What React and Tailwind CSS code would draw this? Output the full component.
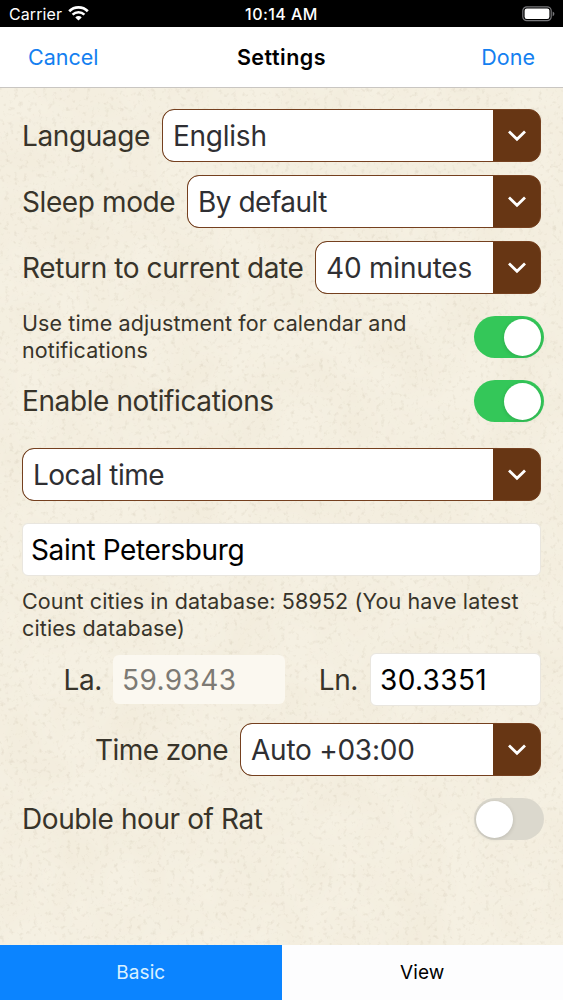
import clsx from "clsx";

function StatusBar() {
  return (
    <div className="grid h-[27px] shrink-0 grid-cols-3 items-center bg-black pt-0.5 text-white">
      <div className="flex items-center gap-[6px] pl-[9px]">
        <span className="-mt-px text-[16px] leading-5 tracking-[0.1px]">Carrier</span>
        <svg width="21" height="15" viewBox="0 0 21 15" fill="none" stroke="currentColor" className="-mt-0.5">
          <path d="M1.2 5.3 A13.2 13.2 0 0 1 19.8 5.3" strokeWidth="2.7" />
          <path d="M4.6 8.7 A8.4 8.4 0 0 1 16.4 8.7" strokeWidth="2.5" />
          <path d="M10.5 14.6 L7.3 11.4 A4.6 4.6 0 0 1 13.7 11.4 Z" fill="currentColor" stroke="none" />
        </svg>
      </div>
      <span className="-mt-px text-center text-[16px] leading-5 font-medium tracking-[0.45px]">10:14 AM</span>
      <div className="-mt-0.5 flex justify-end pr-[8px]">
        <svg width="33" height="16" viewBox="0 0 33 16">
          <rect x="0.8" y="0.8" width="28.4" height="13.9" rx="4" fill="none" stroke="#77777a" strokeWidth="1.2" />
          <rect x="2.6" y="2.5" width="24.8" height="10.5" rx="2.2" fill="#fff" />
          <path d="M30.7 5.4 Q32.4 6.2 32.4 7.8 T30.7 10.2 Z" fill="#77777a" />
        </svg>
      </div>
    </div>
  );
}

function NavBar() {
  return (
    <header className="grid h-[61px] shrink-0 grid-cols-3 items-center border-b border-[#c9c6c2] bg-white px-7 text-[21.5px]">
      <button className="text-left text-[#147ff0]">Cancel</button>
      <h1 className="text-center font-semibold tracking-[0.5px] text-black">Settings</h1>
      <button className="text-right text-[#147ff0]">Done</button>
    </header>
  );
}

// faint grain of the paper behind the form
function PaperTexture() {
  return (
    <svg className="absolute inset-0 -z-10 h-full w-full">
      <filter id="grain" x="0" y="0" width="100%" height="100%" colorInterpolationFilters="sRGB">
        <feTurbulence type="fractalNoise" baseFrequency="0.21" numOctaves="4" seed="4" />
        <feColorMatrix values="0 0 0 0 0.66  0 0 0 0 0.6  0 0 0 0 0.5  0.5 0 0 0 -0.28" />
      </filter>
      <filter id="blotches" x="0" y="0" width="100%" height="100%" colorInterpolationFilters="sRGB">
        <feTurbulence type="fractalNoise" baseFrequency="0.018" numOctaves="3" seed="9" />
        <feColorMatrix values="0 0 0 0 0.94  0 0 0 0 0.91  0 0 0 0 0.84  0.9 0 0 0 -0.28" />
      </filter>
      <rect width="100%" height="100%" filter="url(#blotches)" />
      <rect width="100%" height="100%" filter="url(#grain)" />
    </svg>
  );
}

function Select({ value, className }) {
  return (
    <button
      className={clsx(
        "flex h-[53px] min-w-0 overflow-hidden rounded-xl border-[1.5px] border-[#75401f] bg-[#673614] text-left text-[#2f2f33]",
        className
      )}
    >
      <span className="flex h-full flex-1 items-center rounded-l-[11px] bg-white pl-[10px] whitespace-nowrap">
        {value}
      </span>
      <span className="flex h-full w-[47px] shrink-0 items-center justify-center">
        <svg width="20" height="14" viewBox="0 0 20 14" fill="none" stroke="#fff" strokeWidth="2.8">
          <path d="M2 2.4 L10 10.2 L18 2.4" />
        </svg>
      </span>
    </button>
  );
}

function Toggle({ on }) {
  return (
    <span
      className={clsx(
        "-mr-[3px] flex h-[42px] w-[70px] shrink-0 items-center rounded-full",
        on ? "justify-end bg-[#34c759] pr-[3px]" : "justify-start bg-[#dbd8cd] pl-[2px]"
      )}
    >
      <span className="h-[37px] w-[37px] rounded-full bg-white shadow-[0_1px_4px_rgba(0,0,0,0.15)]" />
    </span>
  );
}

export default function App() {
  return (
    <div className="flex h-[1000px] w-[563px] flex-col overflow-hidden font-['Inter',sans-serif]">
      <StatusBar />
      <NavBar />

      <main className="relative isolate flex flex-1 flex-col bg-[#f5f0e2] px-[22px] pt-[21px] text-[28px] leading-8 tracking-[-0.4px] text-[#38342a]">
        <PaperTexture />

        <div className="flex flex-col gap-[13px]">
          <div className="flex items-center justify-between">
            <span>Language</span>
            <Select value="English" className="w-[379px] tracking-[-0.25px]" />
          </div>
          <div className="flex items-center justify-between">
            <span>Sleep mode</span>
            <Select value="By default" className="w-[354px] tracking-[-0.5px]" />
          </div>
          <div className="flex items-center justify-between">
            <span className="whitespace-nowrap">Return to current date</span>
            <Select value="40 minutes" className="w-[226px] tracking-[-0.2px]" />
          </div>
        </div>

        <div className="mt-4 flex h-[54px] items-center justify-between">
          <p className="text-[21.5px] leading-[27px] tracking-[0.1px]">
            Use time adjustment for calendar and
            <br />
            notifications
          </p>
          <Toggle on />
        </div>
        <div className="mt-[16px] flex h-[42px] items-center justify-between">
          <span>Enable notifications</span>
          <Toggle on />
        </div>

        <Select value="Local time" className="mt-[26px] w-full shrink-0 tracking-[-0.5px]" />

        <div className="mt-[22px] flex h-[53px] shrink-0 items-center rounded-md border border-[#e9e6df] bg-white pl-2 text-black">
          <span>Saint Petersburg</span>
        </div>
        <p className="mt-[12px] text-[21.5px] leading-[27px] tracking-[0.12px] whitespace-nowrap">
          Count cities in database: 58952 (You have latest
          <br />
          cities database)
        </p>

        <div className="mt-[11px] flex h-[53px] items-center">
          <span className="w-[80px] text-right">La.</span>
          <span className="ml-[11px] flex h-[49px] w-[172px] items-center rounded-md bg-[#fbf8f0] pl-[9px] tracking-[0.4px] text-[#7d7a74]">
            59.9343
          </span>
          <span className="w-[73px] text-right">Ln.</span>
          <span className="ml-auto flex h-[53px] w-[171px] items-center rounded-md border border-[#e9e6df] bg-white pl-[9px] tracking-[0.35px] text-black">
            30.3351
          </span>
        </div>

        <div className="mt-[17px] flex items-center justify-end gap-3">
          <span className="tracking-[-0.6px]">Time zone</span>
          <Select value="Auto +03:00" className="w-[301px] tracking-[-0.25px]" />
        </div>
        <div className="mt-[22px] flex h-[42px] items-center justify-between">
          <span>Double hour of Rat</span>
          <Toggle />
        </div>
      </main>

      <nav className="grid h-[55px] shrink-0 grid-cols-2 text-[19px] tracking-[0.1px]">
        <button className="bg-[#0b84ff] pt-0.5 text-[#d9f1ff]">Basic</button>
        <button className="bg-[#fdfdfe] pt-0.5 text-black">View</button>
      </nav>
    </div>
  );
}
